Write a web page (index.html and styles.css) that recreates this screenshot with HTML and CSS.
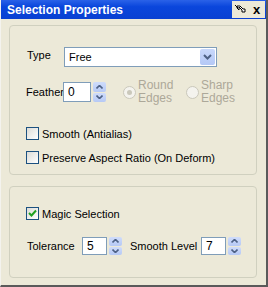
FILE: index.html
```html
<!DOCTYPE html>
<html>
<head>
    <title>Selection Properties</title>
    <link rel="stylesheet" href="styles.css">
</head>
<body>
    <div class="window">
        <div class="titlebar">
            <span class="title">Selection Properties</span>
            <div class="tbuttons">
                <span class="tbtn">
                    <svg width="13" height="11" viewBox="0 0 13 11">
                        <path d="M1 1 L4 4 M3 2 L6 2 L9 5 L11 5 L11 8 L8 8 L8 6 L5 3 L5 6 L3 4 Z" fill="#fff" stroke="#000" stroke-width="1"/>
                    </svg>
                </span>
                <span class="tbtn close">x</span>
            </div>
        </div>

        <div class="content">
            <div class="group group-top">
                <div class="row row-type">
                    <label class="lbl lbl-type">Type</label>
                    <div class="select">
                        <span class="select-text">Free</span>
                        <span class="select-btn">
                            <svg width="9" height="6" viewBox="0 0 9 6"><path d="M1 1 L4.5 4.5 L8 1" fill="none" stroke="#4d6185" stroke-width="2"/></svg>
                        </span>
                    </div>
                </div>

                <div class="row row-feather">
                    <label class="lbl">Feather</label>
                    <div class="spin">
                        <span class="spin-input">0</span>
                        <span class="spin-btns">
                            <span class="sb up"><svg width="7" height="4" viewBox="0 0 7 4"><path d="M0.5 3.5 L3.5 0.5 L6.5 3.5" fill="none" stroke="#4d6185" stroke-width="1.6"/></svg></span>
                            <span class="sb down"><svg width="7" height="4" viewBox="0 0 7 4"><path d="M0.5 0.5 L3.5 3.5 L6.5 0.5" fill="none" stroke="#4d6185" stroke-width="1.6"/></svg></span>
                        </span>
                    </div>
                    <div class="radio radio-round">
                        <span class="radio-dot checked"></span>
                        <span class="radio-text">Round<br>Edges</span>
                    </div>
                    <div class="radio">
                        <span class="radio-dot"></span>
                        <span class="radio-text">Sharp<br>Edges</span>
                    </div>
                </div>

                <div class="check check-first">
                    <span class="box"></span>
                    <span>Smooth (Antialias)</span>
                </div>
                <div class="check">
                    <span class="box"></span>
                    <span>Preserve Aspect Ratio (On Deform)</span>
                </div>
            </div>

            <div class="group group-bottom">
                <div class="check check-magic">
                    <span class="box checked">
                        <svg width="9" height="9" viewBox="0 0 9 9"><path d="M1 4 L3.5 6.5 L8 1.5" fill="none" stroke="#21a121" stroke-width="2"/></svg>
                    </span>
                    <span>Magic Selection</span>
                </div>
                <div class="row row-tol">
                    <label class="lbl lbl-tol">Tolerance</label>
                    <div class="spin small">
                        <span class="spin-input">5</span>
                        <span class="spin-btns">
                            <span class="sb up"><svg width="7" height="4" viewBox="0 0 7 4"><path d="M0.5 3.5 L3.5 0.5 L6.5 3.5" fill="none" stroke="#4d6185" stroke-width="1.6"/></svg></span>
                            <span class="sb down"><svg width="7" height="4" viewBox="0 0 7 4"><path d="M0.5 0.5 L3.5 3.5 L6.5 0.5" fill="none" stroke="#4d6185" stroke-width="1.6"/></svg></span>
                        </span>
                    </div>
                    <label class="lbl lbl-level">Smooth Level</label>
                    <div class="spin small">
                        <span class="spin-input">7</span>
                        <span class="spin-btns">
                            <span class="sb up"><svg width="7" height="4" viewBox="0 0 7 4"><path d="M0.5 3.5 L3.5 0.5 L6.5 3.5" fill="none" stroke="#4d6185" stroke-width="1.6"/></svg></span>
                            <span class="sb down"><svg width="7" height="4" viewBox="0 0 7 4"><path d="M0.5 0.5 L3.5 3.5 L6.5 0.5" fill="none" stroke="#4d6185" stroke-width="1.6"/></svg></span>
                        </span>
                    </div>
                </div>
            </div>
        </div>
    </div>
</body>
</html>
```

FILE: styles.css
```css
body {
    margin: 0;
    padding: 0;
    font-family: "Liberation Sans", Arial, sans-serif;
    font-size: 11px;
    color: #000;
    background-color: #ece9d8;
    white-space: nowrap;
}

.window {
    box-sizing: border-box;
    width: 268px;
    height: 287px;
    background-color: #ece9d8;
    border-left: 1px solid #f4f3ee;
    border-right: 2px solid #5a5a5a;
    border-bottom: 2px solid #5a5a5a;
}

.titlebar {
    height: 19px;
    display: flex;
    align-items: center;
    background: linear-gradient(#2a62e8, #0a46dc 35%, #0940d2);
    padding-left: 6px;
}

.title {
    color: #fff;
    font-weight: bold;
    font-size: 12px;
}

.tbuttons {
    margin-left: auto;
    display: flex;
    height: 17px;
    margin-right: 1px;
}

.tbtn {
    width: 16px;
    height: 17px;
    background-color: #ece9d8;
    display: flex;
    align-items: center;
    justify-content: center;
}

.close {
    width: 17px;
    font-weight: bold;
    font-size: 13px;
    line-height: 15px;
}

.content {
    padding: 6px 9px 0 8px;
}

.group {
    box-sizing: border-box;
    border: 1px solid #d0d0bf;
    border-radius: 4px;
    padding-left: 16px;
}

.group-top {
    height: 150px;
    padding-top: 21px;
}

.group-bottom {
    height: 92px;
    margin-top: 11px;
    padding-top: 20px;
}

.row {
    display: flex;
    align-items: center;
}

.lbl {
    width: 37px;
}

.lbl-type {
    padding-left: 1px;
    width: 37px;
    margin-top: -4px;
}

.select {
    box-sizing: border-box;
    width: 153px;
    height: 20px;
    border: 1px solid #7f9db9;
    background-color: #fff;
    display: flex;
    align-items: center;
}

.select-text {
    padding-left: 4px;
    flex: 1;
}

.select-btn {
    width: 15px;
    height: 16px;
    margin-right: 1px;
    border-radius: 2px;
    background: linear-gradient(#c8d8fb, #b4c8f6);
    display: flex;
    align-items: center;
    justify-content: center;
}

.row-feather {
    margin-top: 12px;
}

.spin {
    display: flex;
    align-items: stretch;
    height: 20px;
}

.spin.small {
    height: 18px;
}

.spin-input {
    box-sizing: border-box;
    width: 28px;
    border: 1px solid #7f9db9;
    background-color: #fff;
    padding-left: 4px;
    font-size: 12px;
    display: flex;
    align-items: center;
}

.spin.small .spin-input {
    width: 25px;
}

.spin-btns {
    margin-left: 2px;
    width: 13px;
    display: flex;
    flex-direction: column;
    gap: 1px;
}

.sb {
    flex: 1;
    border-radius: 2px;
    background: linear-gradient(#cfdcfb, #b6c9f5);
    display: flex;
    align-items: center;
    justify-content: center;
}

.radio {
    display: flex;
    align-items: center;
    color: #aca899;
}

.radio-round {
    margin-left: 17px;
    width: 63px;
}

.radio-dot {
    box-sizing: border-box;
    width: 13px;
    height: 13px;
    border-radius: 50%;
    border: 1px solid #cac8bb;
    background-color: #f4f3ee;
    margin-right: 2px;
    display: flex;
    align-items: center;
    justify-content: center;
}

.radio-dot.checked::after {
    content: "";
    width: 5px;
    height: 5px;
    border-radius: 50%;
    background-color: #cac8bb;
}

.radio-text {
    line-height: 13px;
    font-size: 12px;
}

.check {
    display: flex;
    align-items: center;
    margin-top: 11px;
}

.check-first {
    margin-top: 22px;
}

.check-magic {
    margin-top: 0;
}

.box {
    box-sizing: border-box;
    width: 13px;
    height: 13px;
    border: 1px solid #1c5180;
    background: linear-gradient(135deg, #dcdcd7, #fff);
    margin-right: 3px;
    display: flex;
    align-items: center;
    justify-content: center;
}

.row-tol {
    margin-top: 17px;
}

.lbl-tol {
    width: 55px;
    padding-left: 1px;
}

.lbl-level {
    width: 64px;
    margin-left: 8px;
    margin-right: 7px;
}
```
